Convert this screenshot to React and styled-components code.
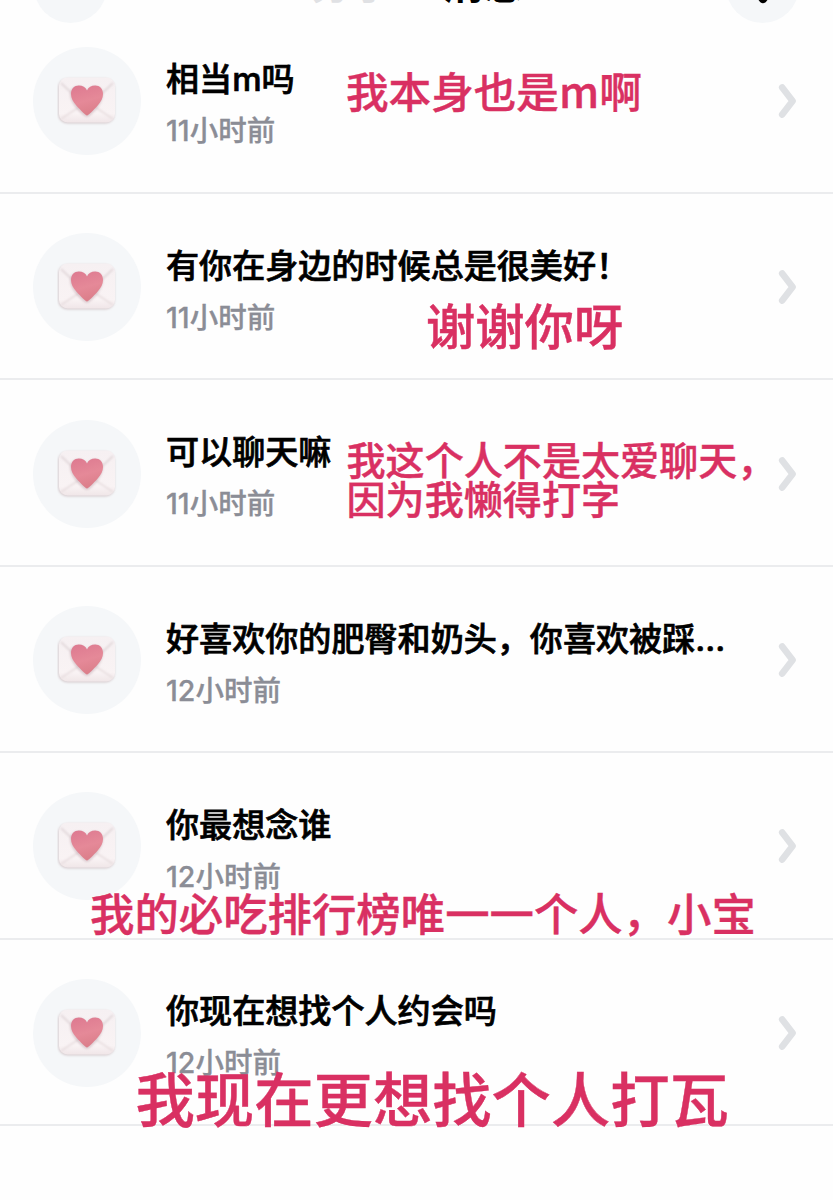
import React from 'react';
import styled, { createGlobalStyle } from 'styled-components';

const messages = [
	{ id: 1, title: '相当m吗', time: '11小时前' },
	{ id: 2, title: '有你在身边的时候总是很美好！', time: '11小时前' },
	{ id: 3, title: '可以聊天嘛', time: '11小时前' },
	{ id: 4, title: '好喜欢你的肥臀和奶头，你喜欢被踩...', time: '12小时前' },
	{ id: 5, title: '你最想念谁', time: '12小时前' },
	{ id: 6, title: '你现在想找个人约会吗', time: '12小时前' },
];

// Handwritten replies laid over the list
const notes = [
	{ x: 346, y: 69, size: 42.6, lines: ['我本身也是m啊'] },
	{ x: 426, y: 299, size: 49.3, lines: ['谢谢你呀'] },
	{
		x: 346.5,
		y: 439,
		size: 39.1,
		lines: ['我这个人不是太爱聊天，', '因为我懒得打字'],
	},
	{ x: 90, y: 890, size: 44.4, lines: ['我的必吃排行榜唯一一个人，小宝'] },
	{ x: 135.5, y: 1067, size: 59.35, lines: ['我现在更想找个人打瓦'] },
];

function LetterIcon() {
	return (
		<svg width="60" height="50" viewBox="0 0 60 50">
			<defs>
				<linearGradient id="paper" x1="0" y1="0" x2="0" y2="1">
					<stop offset="0" stopColor="#f6f0f2" />
					<stop offset="0.8" stopColor="#f9f3f4" />
					<stop offset="1" stopColor="#f0e6e8" />
				</linearGradient>
				<linearGradient id="heart" x1="0" y1="0" x2="0.3" y2="1">
					<stop offset="0" stopColor="#dd7990" />
					<stop offset="0.6" stopColor="#e58998" />
					<stop offset="1" stopColor="#dc7f8b" />
				</linearGradient>
				<filter id="soft" x="-20%" y="-20%" width="140%" height="140%">
					<feGaussianBlur stdDeviation="0.9" />
				</filter>
			</defs>
			<rect x="1.2" y="2.4" width="56.4" height="45" rx="9" fill="#d6cbce" filter="url(#soft)" />
			<rect x="2" y="1.4" width="56" height="45" rx="8.5" fill="url(#paper)" />
			<g fill="none" strokeWidth="1.4" filter="url(#soft)">
				<path d="M4 43 L22 31 M56 43 L38 31" stroke="#e2d7d9" />
				<path d="M4 7 L25 27 Q30 31 35 27 L56 7" stroke="#dacfd2" />
			</g>
			<path
				d="M30 41 C27 41 13 28.5 13 18.5 C13 8.5 26 7.5 30 14.5 C34 7.5 46 8.5 46 18.5 C46 28.5 33 41 30 41 Z"
				fill="#b99ca5"
				opacity="0.45"
				filter="url(#soft)"
			/>
			<path
				d="M30 39.4 C28.5 39.4 23.5 34 19.5 29.7 C16 25.9 14 22.3 14 18.1 C14 13 17.3 9.6 21.8 9.6 C25.6 9.6 28.6 11.6 30 14.4 C31.4 11.6 34.4 9.6 38.2 9.6 C42.7 9.6 46 13 46 18.1 C46 22.3 44 25.9 40.5 29.7 C36.5 34 31.5 39.4 30 39.4 Z"
				fill="url(#heart)"
			/>
		</svg>
	);
}

function ChevronIcon() {
	return (
		<svg width="20" height="36" viewBox="0 0 20 36" fill="none">
			<path
				d="M4.2 4.4 L14.6 18 L4.2 31.6"
				stroke="#dfe1e4"
				strokeWidth="6.6"
				strokeLinecap="round"
				strokeLinejoin="round"
			/>
		</svg>
	);
}

export default function App() {
	return (
		<Page lang="zh-CN">
			<GlobalStyle />
			<Header>
				<RoundButton />
				<Tabs>
					<Tab>分享</Tab>
					<Tab $active>消息</Tab>
				</Tabs>
				<RoundButton>
					<svg width="30" height="36" viewBox="0 0 30 36" fill="none">
						<path
							d="M15 4 V31 M5 20 L15 31 L25 20"
							stroke="#000"
							strokeWidth="8"
							strokeLinecap="round"
							strokeLinejoin="round"
						/>
					</svg>
				</RoundButton>
			</Header>
			<List>
				{messages.map((message) => (
					<Row key={message.id}>
						<Avatar>
							<LetterIcon />
						</Avatar>
						<Info>
							<Title>{message.title}</Title>
							<Time>{message.time}</Time>
						</Info>
						<ChevronIcon />
					</Row>
				))}
			</List>
			{notes.map((note) => (
				<Note key={note.y} $x={note.x} $y={note.y} $size={note.size}>
					{note.lines.map((line) => (
						<div key={line}>{line}</div>
					))}
				</Note>
			))}
		</Page>
	);
}

const GlobalStyle = createGlobalStyle`
	* {
		box-sizing: border-box;
	}
	body {
		margin: 0;
		background: #fefefe;
		font-family: Inter, 'Noto Sans CJK SC', sans-serif;
	}
`;
const Page = styled.div`
	position: relative;
	height: 1200px;
	overflow: hidden;
	background: #fefefe;
`;
const Header = styled.header`
	display: flex;
	justify-content: space-between;
	height: 73px;
	margin-top: -50.5px;
	padding: 0 34px;
`;
const RoundButton = styled.button`
	display: flex;
	align-items: center;
	justify-content: center;
	width: 73px;
	height: 73px;
	padding: 0;
	border: 0;
	border-radius: 50%;
	background: #f5f7f9;
`;
const Tabs = styled.div`
	display: flex;
	gap: 50px;
	padding: 13px 0 0 2px;
`;
const Tab = styled.span`
	font-size: 41px;
	font-weight: 700;
	line-height: 42px;
	color: ${(props) => (props.$active ? '#000' : '#e0e1e4')};
`;
const List = styled.ul`
	margin: -15.2px 0 0;
	padding: 0;
	list-style: none;
`;
const Row = styled.li`
	display: flex;
	align-items: center;
	height: 186.45px;
	padding: 2.4px 35px 0 33px;
	border-bottom: 2px solid #ebecee;
`;
const Avatar = styled.div`
	display: flex;
	flex: none;
	align-items: center;
	justify-content: center;
	width: 108px;
	height: 108px;
	border-radius: 50%;
	background: #f5f7f9;
`;
const Info = styled.div`
	flex: 1;
	min-width: 0;
	padding: 5px 0 0 25px;
`;
const Title = styled.div`
	font-size: 33.1px;
	font-weight: 500;
	line-height: 44px;
	white-space: nowrap;
	color: #000;
	-webkit-text-stroke: 0.7px #000;
`;
const Time = styled.div`
	margin-top: 12px;
	font-size: 28.5px;
	font-weight: 500;
	line-height: 36px;
	color: #8b8d96;
	-webkit-text-stroke: 0.3px #8b8d96;
`;
const Note = styled.div`
	position: absolute;
	left: ${(props) => props.$x}px;
	top: ${(props) => props.$y}px;
	font-family: 'Noto Sans CJK SC', sans-serif;
	font-size: ${(props) => props.$size}px;
	font-weight: 500;
	line-height: 1;
	white-space: nowrap;
	color: #d93062;
	-webkit-text-stroke: 0.4px #d93062;
`;
